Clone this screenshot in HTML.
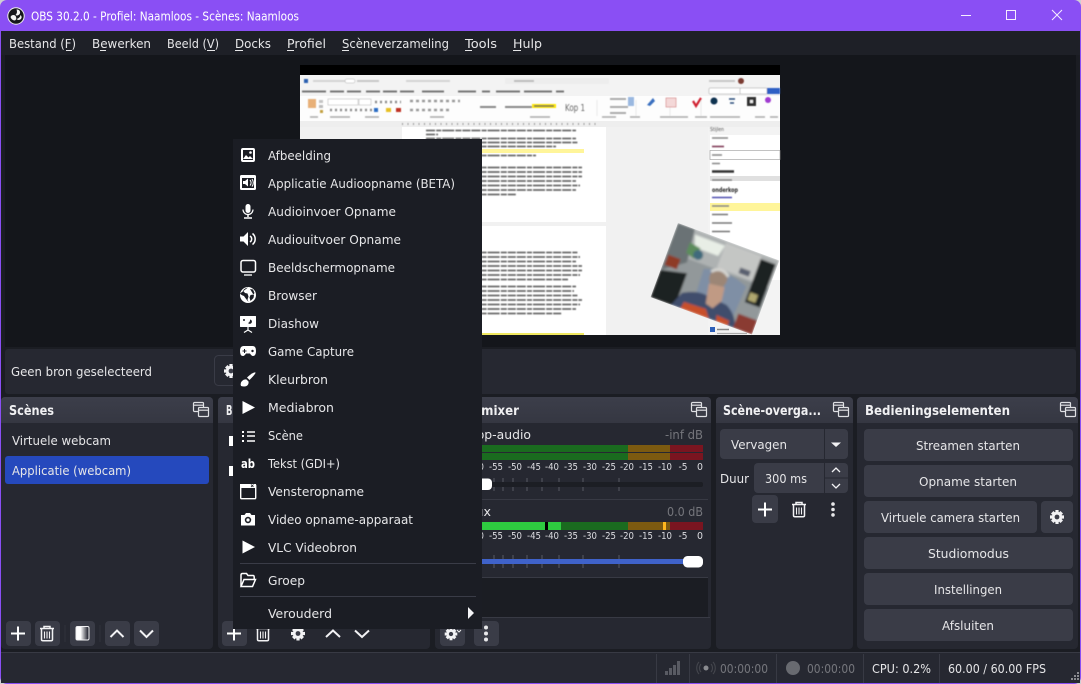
<!DOCTYPE html>
<html lang="nl"><head><meta charset="utf-8"><title>OBS 30.2.0</title>
<style>
html,body{margin:0;padding:0;background:#cfcfd4;overflow:hidden}
svg{display:block}
text{font-family:"DejaVu Sans","Liberation Sans",sans-serif;font-size:12.5px;fill:#e6e6e8}
.b{font-weight:bold;font-size:13px;fill:#f0f0f2}
.s{font-size:10px;fill:#dcdce0}
.g{fill:#75767c}
.t{font-size:5px;fill:#555}
.w{fill:#fff}
.bt{fill:#3a3c47}
</style></head><body>
<svg width="1081" height="684" viewBox="0 0 1081 684" xmlns="http://www.w3.org/2000/svg">
<defs>
<filter id="bl" x="-10%" y="-10%" width="120%" height="120%"><feGaussianBlur stdDeviation="1"/></filter>
<filter id="sb" x="-5%" y="-5%" width="110%" height="110%"><feGaussianBlur stdDeviation="0.5"/></filter>
<linearGradient id="hg" x1="0" y1="0" x2="0" y2="1"><stop offset="0" stop-color="#3c3e4a"/><stop offset="1" stop-color="#353742"/></linearGradient>
<linearGradient id="fg" x1="0" y1="0" x2="1" y2="0"><stop offset="0" stop-color="#fff"/><stop offset=".35" stop-color="#fff"/><stop offset=".9" stop-color="#30323c"/></linearGradient>
<g id="fl" fill="none" stroke="#dfe0e4" stroke-width="1.2"><rect x="1.5" y="1.5" width="10" height="9" rx="1"/><path d="M1.5 4.2h10" /><rect x="6.5" y="6.5" width="10" height="9" rx="1" fill="#3a3c47"/><path d="M6.5 9.2h10"/></g>
<g id="plus"><path d="M-7 0H7M0-7V7" stroke="#fff" stroke-width="2"/></g>
<g id="trash" fill="none" stroke="#f2f2f4" stroke-width="1.5"><path d="M-7-5H7M-3-5V-7H3V-5"/><path d="M-5.5-4.5V6Q-5.5 7.3-4 7.3H4Q5.5 7.3 5.5 6V-4.5"/><path d="M-2.5-2V5M0-2V5M2.500-2V5" stroke-width="1.100"/></g>
<g id="gear"><circle r="5.200" fill="#f2f2f4"/><path d="M-1.600-7H1.600V7H-1.600ZM-7-1.600V1.600H7V-1.600ZM-6-3.500L-3.500-6 6 3.500 3.500 6ZM3.500-6L6-3.500-3.500 6-6 3.500Z" fill="#f2f2f4"/><circle r="2.400" fill="#3a3c47"/></g>
<g id="dots" fill="#e8e8ea"><circle cy="-6" r="2"/><circle r="2"/><circle cy="6" r="2"/></g>
<clipPath id="cam"><rect width="108" height="79"/></clipPath>
</defs>

<!-- window frame -->
<rect width="1081" height="684" rx="7" fill="#8a4ff4"/>
<rect x="1" y="31" width="1079" height="652" fill="#1b1d23"/>

<!-- title bar -->
<circle cx="16" cy="16" r="8.200" fill="#16171b" stroke="#eee" stroke-width="1"/>
<path d="M16.500 9.500a3 3 0 1 1-1 5.500a5 5 0 0 0 1-5.500ZM10.500 17a3 3 0 1 1 4.500 3.500a5 5 0 0 1-4.500-3.500ZM21.500 18a3 3 0 0 1-5 1a5 5 0 0 0 4-4a3 3 0 0 1 1 3Z" fill="#f4f4f4"/>
<text x="31" y="20.500" textLength="268" lengthAdjust="spacingAndGlyphs" style="font-size:12px;fill:#fff">OBS 30.2.0 - Profiel: Naamloos - Scènes: Naamloos</text>
<path d="M961 15.500H971" stroke="#f6eeff" stroke-width="1"/>
<rect x="1006.500" y="10.500" width="9" height="9" fill="none" stroke="#f6eeff" stroke-width="1"/>
<path d="M1052 10L1062 20M1062 10L1052 20" stroke="#f6eeff" stroke-width="1"/>

<!-- menu bar -->
<rect x="1" y="31" width="1079" height="24" fill="#1e2027"/>
<g>
<text x="9" y="48" textLength="67" lengthAdjust="spacingAndGlyphs">Bestand (F)</text><rect x="66" y="50" width="6" height="1" fill="#e6e6e8"/>
<text x="92" y="48" textLength="59" lengthAdjust="spacingAndGlyphs">Bewerken</text><rect x="100" y="50" width="6" height="1" fill="#e6e6e8"/>
<text x="167" y="48" textLength="52" lengthAdjust="spacingAndGlyphs">Beeld (V)</text><rect x="207" y="50" width="8" height="1" fill="#e6e6e8"/>
<text x="235" y="48" textLength="36" lengthAdjust="spacingAndGlyphs">Docks</text><rect x="235" y="50" width="8" height="1" fill="#e6e6e8"/>
<text x="287" y="48" textLength="39" lengthAdjust="spacingAndGlyphs">Profiel</text><rect x="287" y="50" width="7" height="1" fill="#e6e6e8"/>
<text x="342" y="48" textLength="107" lengthAdjust="spacingAndGlyphs">Scèneverzameling</text><rect x="342" y="50" width="7" height="1" fill="#e6e6e8"/>
<text x="465" y="48" textLength="32" lengthAdjust="spacingAndGlyphs">Tools</text><rect x="465" y="50" width="7" height="1" fill="#e6e6e8"/>
<text x="513" y="48" textLength="29" lengthAdjust="spacingAndGlyphs">Hulp</text><rect x="513" y="50" width="8" height="1" fill="#e6e6e8"/>
</g>

<!-- preview -->
<rect x="5" y="55" width="1071" height="292" fill="#14161b"/>
<rect x="300" y="65" width="480" height="270" fill="#000"/>
<rect x="300" y="75" width="480" height="260" fill="#f1f1f1"/>
<rect x="300" y="75" width="480" height="21" fill="#f3f3f3"/>
<rect x="300" y="96" width="480" height="25" fill="#fdfdfd"/>
<rect x="300" y="121" width="480" height="6" fill="#eeeeee"/>
<rect x="402" y="127" width="204" height="95" fill="#fff"/>
<rect x="402" y="226" width="204" height="109" fill="#fff"/>
<rect x="426" y="149" width="158" height="4" fill="#fff59a"/>
<rect x="426" y="333" width="158" height="2" fill="#f0e860"/>
<rect x="708" y="127" width="72" height="208" fill="#f3f3f3"/>
<rect x="710" y="135" width="70" height="145" fill="#fff"/>
<rect x="710" y="150.500" width="70" height="9" fill="#fff" stroke="#999" stroke-width=".6"/>
<rect x="710" y="176" width="70" height="5" fill="#e0e0e0"/>
<rect x="710" y="203" width="70" height="8" fill="#fff59a"/>
<g filter="url(#sb)">
<rect x="304" y="79" width="4" height="4" fill="#2b5fb0"/>
<rect x="313" y="80" width="32" height="2" fill="#d4d4d4"/><rect x="345" y="79" width="10" height="4" rx="2" fill="#fff" stroke="#aaa" stroke-width=".5"/>
<rect x="357" y="80" width="22" height="2" fill="#c8c8c8"/><rect x="406" y="80" width="44" height="2" fill="#d4d4d4"/>
<rect x="505" y="78" width="104" height="6" rx="1" fill="#ededed"/><rect x="514" y="80" width="20" height="2" fill="#bbb"/>
<rect x="709" y="80" width="26" height="2" fill="#c8c8c8"/><circle cx="741" cy="81" r="3" fill="#7a3a30"/>
<rect x="709" y="88" width="32" height="6" rx="1" fill="#fff" stroke="#999" stroke-width=".5"/><rect x="740" y="88" width="27" height="6" rx="1" fill="#fff" stroke="#999" stroke-width=".5"/><rect x="767" y="88" width="13" height="6" fill="#2f5fc4"/>
<path d="M302 91.500h24M330 91.500h14M347 91.500h14M366 91.500h14M383 91.500h14M400 91.500h14M422 91.500h22M458 91.500h18M482 91.500h8M496 91.500h24M524 91.500h28M556 91.500h8" stroke="#777" stroke-width="2"/>
<rect x="308" y="99" width="8" height="9" fill="#e8b078"/><rect x="319" y="100" width="4" height="3" fill="#c4c4c4"/><rect x="319" y="105" width="4" height="3" fill="#bbb"/><rect x="320" y="110" width="3" height="3" fill="#c3a040"/>
<rect x="328" y="99" width="30" height="6" fill="#fff" stroke="#aaa" stroke-width=".5"/><rect x="359" y="99" width="12" height="6" fill="#fff" stroke="#aaa" stroke-width=".5"/>
<path d="M375 102h26M330 110h42" stroke="#888" stroke-width="2.500" stroke-dasharray="2 3"/>
<rect x="374" y="108" width="4" height="4" fill="#2b6cc4"/><rect x="386" y="108" width="5" height="4" fill="#e8c020"/><rect x="396" y="108" width="5" height="4" fill="#c03020"/>
<path d="M410 101h50M410 110h42" stroke="#999" stroke-width="2.500" stroke-dasharray="3 3"/>
<path d="M480 107h16M505 107h27" stroke="#888" stroke-width="2"/>
<rect x="532" y="104" width="24" height="4" fill="#ffe800"/><path d="M534 106h20" stroke="#665" stroke-width="1.500"/>
<text x="565" y="111" textLength="20" lengthAdjust="spacingAndGlyphs" style="font-size:10px;fill:#666">Kop 1</text>
<path d="M597 100v16M670 100v16M636 100v16M701 100v16" stroke="#ddd" stroke-width=".6"/>
<path d="M610 99h16M610 107h18M610 113h16" stroke="#aaa" stroke-width="2"/>
<rect x="628" y="97" width="6" height="9" fill="#9ab8e0"/><path d="M647 105l6-7 2 3-5 5z" fill="#3a70c0"/><rect x="666" y="98" width="10" height="9" fill="#f4d8d8" stroke="#c86060" stroke-width=".5"/><path d="M693 101l3 5 5-8" stroke="#d02030" stroke-width="2.200" fill="none"/>
<circle cx="714" cy="101" r="3.500" fill="#113050"/><path d="M729 99h6M730 103h4" stroke="#2a4a7a" stroke-width="1.500"/><rect x="747" y="97" width="9" height="9" fill="#333"/><rect x="750" y="100" width="3" height="3" fill="#eee"/><circle cx="768" cy="100" r="3" fill="#a03ad0"/>
<path d="M330 117h20M365 117h14M430 117h14M530 117h20M602 117h14M630 117h10M660 117h28M695 117h12M710 117h30M755 117h10M770 117h8M310 117h8" stroke="#aaa" stroke-width="1.500"/>
<path d="M402 124h196" stroke="#999" stroke-width="2" stroke-dasharray="1 4.500"/>
<g fill="none" stroke="#6a6a6a" stroke-width="1.700" stroke-dasharray="9 1.200 5 1 12 1.200 6 1 8 1">
<path d="M426 130.500h150M426 134.500h12M426 138.500h150M426 142.500h152M426 146.500h130M426 155.500h110"/>
<path d="M426 167.500h156M426 172h156M426 176.500h156M426 181h150M426 185.500h154M426 190h150M426 194.500h90"/>
<path d="M426 252.500h152M426 257h154M426 261.500h150M426 266h156M426 270.500h156M426 275h154M426 279.500h142"/>
<path d="M426 286.500h150M426 291h148M426 295.500h152M426 300h156M426 304.500h154M426 309h150M426 313.500h136"/>
</g>
<text x="710" y="131" class="t" textLength="14" lengthAdjust="spacingAndGlyphs">Stijlen</text>
<path d="M712 138h16M712 146.500h12M712 155h10M712 163.500h8" stroke="#888" stroke-width="1.500"/>
<path d="M712 146.500h12" stroke="#8a4060" stroke-width="1.500"/>
<path d="M712 171.500h22" stroke="#333" stroke-width="2.500"/>
<path d="M712 180h20" stroke="#888" stroke-width="1.500"/>
<text x="712" y="192" textLength="26" lengthAdjust="spacingAndGlyphs" style="font-size:6.500px;font-weight:bold;fill:#222">onderkop</text>
<path d="M712 197.500h20" stroke="#5050b0" stroke-width="1.500"/>
<path d="M712 206h17" stroke="#888" stroke-width="1.500"/>
<path d="M712 214.500h16M712 223h20M712 231.500h18" stroke="#777" stroke-width="1.500"/>
</g>
<!-- webcam overlay -->
<g transform="translate(678,223) rotate(20.300)">
<g clip-path="url(#cam)">
<g filter="url(#bl)">
<rect width="108" height="79" fill="#92989a"/>
<path d="M0 0H18L22 34L0 50Z" fill="#6a7274"/>
<path d="M18 0H108V30H22Z" fill="#aeb2b2"/>
<path d="M52 2H90V28H52Z" fill="#c4c6c4"/>
<path d="M20 5H52L49 17H24Z" fill="#e8eee6"/>
<path d="M18 14l12 2-3 12-9-3z" fill="#5c8c5c"/>
<circle cx="30" cy="23" r="5" fill="#3f6a7c"/>
<rect x="2" y="33" width="13" height="11" fill="#8e3a28"/>
<path d="M0 50L26 44V79H0Z" fill="#1f2123"/>
<rect x="90" y="5" width="16" height="46" fill="#1e2020"/>
<rect x="74" y="20" width="11" height="6" fill="#5a6070"/>
<path d="M40 34Q62 26 86 36L84 72H42Z" fill="#7f8fa5"/>
<path d="M22 79L28 64Q42 56 52 58L74 60Q86 66 90 79Z" fill="#3f4d6c"/>
<path d="M33 72L56 71 62 79H32ZM68 73L82 74V79H70Z" fill="#c8502a"/>
<ellipse cx="57" cy="38" rx="9" ry="10" fill="#9c8676"/>
<path d="M48 34Q56 25 66 33" fill="none" stroke="#d4d4d0" stroke-width="3"/>
<path d="M50 46L66 44 68 58 62 68 54 66Z" fill="#c09a84"/>
<rect x="88" y="64" width="20" height="15" fill="#8a3a30"/>
<rect x="92" y="40" width="8" height="8" fill="#b0a870"/>
</g></g></g>
<rect x="710" y="327" width="5" height="5" fill="#2c5fb8"/>
<path d="M717 329.500h12" stroke="#888" stroke-width="1.500"/>
<path d="M717 333.500h30" stroke="#aaa" stroke-width="1.200"/>

<!-- source info row -->
<rect x="5" y="349" width="1071" height="45" rx="3" fill="#262831"/>
<text x="11" y="376" textLength="141" lengthAdjust="spacingAndGlyphs">Geen bron geselecteerd</text>
<rect x="214.500" y="355.500" width="30" height="30" rx="4" fill="none" stroke="#3a3c47"/>
<use href="#gear" transform="translate(231,371)"/>

<!-- docks -->
<g>
<rect x="1" y="397" width="212" height="252" rx="4" fill="#262831"/>
<rect x="218" y="397" width="212" height="252" rx="4" fill="#262831"/>
<rect x="435" y="397" width="276" height="252" rx="4" fill="#262831"/>
<rect x="716" y="397" width="137" height="252" rx="4" fill="#262831"/>
<rect x="857" y="397" width="221" height="252" rx="4" fill="#262831"/>
<path d="M1 401a4 4 0 0 1 4-4H209a4 4 0 0 1 4 4V423H1Z" fill="url(#hg)"/>
<path d="M218 401a4 4 0 0 1 4-4H426a4 4 0 0 1 4 4V423H218Z" fill="url(#hg)"/>
<path d="M435 401a4 4 0 0 1 4-4H707a4 4 0 0 1 4 4V423H435Z" fill="url(#hg)"/>
<path d="M716 401a4 4 0 0 1 4-4H849a4 4 0 0 1 4 4V423H716Z" fill="url(#hg)"/>
<path d="M857 401a4 4 0 0 1 4-4H1074a4 4 0 0 1 4 4V423H857Z" fill="url(#hg)"/>
</g>
<text class="b" x="9" y="415" textLength="45" lengthAdjust="spacingAndGlyphs">Scènes</text>
<text class="b" x="226" y="415" textLength="40" lengthAdjust="spacingAndGlyphs">Bronnen</text>
<text class="b" x="443" y="415" textLength="76" lengthAdjust="spacingAndGlyphs">Audiomixer</text>
<text class="b" x="723" y="415" textLength="98" lengthAdjust="spacingAndGlyphs">Scène-overga...</text>
<text class="b" x="865" y="415" textLength="145" lengthAdjust="spacingAndGlyphs">Bedieningselementen</text>
<use href="#fl" x="192" y="401"/><use href="#fl" x="690" y="401"/><use href="#fl" x="832" y="401"/><use href="#fl" x="1059" y="401"/>

<!-- scenes -->
<text x="12" y="445" textLength="99" lengthAdjust="spacingAndGlyphs">Virtuele webcam</text>
<rect x="5" y="456" width="204" height="28" rx="3" fill="#2549bd"/>
<text x="12" y="475" textLength="119" lengthAdjust="spacingAndGlyphs">Applicatie (webcam)</text>
<rect x="6" y="621" width="25" height="25" rx="4" class="bt"/><rect x="35" y="621" width="25" height="25" rx="4" class="bt"/><rect x="70" y="621" width="25" height="25" rx="4" class="bt"/><rect x="105" y="621" width="25" height="25" rx="4" class="bt"/><rect x="134" y="621" width="25" height="25" rx="4" class="bt"/>
<use href="#plus" transform="translate(18,633.500)"/>
<use href="#trash" transform="translate(47,633.500)"/>
<rect x="76" y="626.500" width="13" height="13.500" rx="1.500" fill="url(#fg)" stroke="#f0f0f2"/>
<path d="M110.500 637L117 630.500 123.500 637M140 630.500L146.500 637 153 630.500" fill="none" stroke="#f2f2f4" stroke-width="2"/>
<path d="M65 625v17M100 625v17" stroke="#30323c"/>

<!-- sources (mostly hidden) -->
<path d="M229 436h6v10h-6zM229 466h6v10h-6z" fill="#fff"/>
<rect x="222" y="621" width="25" height="25" rx="4" class="bt"/>
<use href="#plus" transform="translate(234,633.500)"/>
<use href="#trash" transform="translate(263,633.500)"/>
<use href="#gear" transform="translate(298,633.500)"/>
<path d="M326 637L333 630.500 340 637M355 630.500L362 637 369 630.500" fill="none" stroke="#f2f2f4" stroke-width="2"/>

<!-- mixer -->
<rect x="436" y="578" width="272" height="40" fill="#1b1d23"/>
<path d="M436 499.500H708M436 577.500H708M436 617.500H710" stroke="#383a44"/>
<text x="441" y="439" textLength="90" lengthAdjust="spacingAndGlyphs">Desktop-audio</text>
<text x="665" y="439" textLength="38" lengthAdjust="spacingAndGlyphs" class="g">-inf dB</text>
<text x="441" y="516" textLength="50" lengthAdjust="spacingAndGlyphs">Mic/Aux</text>
<text x="667" y="516" textLength="36" lengthAdjust="spacingAndGlyphs" class="g">0.0 dB</text>
<g>
<rect x="436" y="445" width="192" height="7" fill="#1a6b1f"/><rect x="628" y="445" width="42" height="7" fill="#7c5a10"/><rect x="670" y="445" width="33" height="7" fill="#7a1520"/>
<rect x="436" y="453" width="192" height="7" fill="#1a6b1f"/><rect x="628" y="453" width="42" height="7" fill="#7c5a10"/><rect x="670" y="453" width="33" height="7" fill="#7a1520"/>
<rect x="436" y="522" width="192" height="8" fill="#1a6b1f"/><rect x="628" y="522" width="42" height="8" fill="#7c5a10"/><rect x="670" y="522" width="33" height="8" fill="#7a1520"/>
<rect x="436" y="522" width="109" height="8" fill="#2ecc40"/><rect x="545" y="522" width="3" height="8" fill="#000"/><rect x="548" y="522" width="13" height="8" fill="#2ecc40"/>
<rect x="663" y="522" width="3" height="8" fill="#ffb71f"/>
</g>
<g>
<text class="s" x="477" y="470" text-anchor="middle" textLength="14" lengthAdjust="spacingAndGlyphs">-60</text><text class="s" x="496" y="470" text-anchor="middle" textLength="14" lengthAdjust="spacingAndGlyphs">-55</text><text class="s" x="515" y="470" text-anchor="middle" textLength="14" lengthAdjust="spacingAndGlyphs">-50</text><text class="s" x="534" y="470" text-anchor="middle" textLength="14" lengthAdjust="spacingAndGlyphs">-45</text><text class="s" x="552" y="470" text-anchor="middle" textLength="14" lengthAdjust="spacingAndGlyphs">-40</text><text class="s" x="571" y="470" text-anchor="middle" textLength="14" lengthAdjust="spacingAndGlyphs">-35</text><text class="s" x="590" y="470" text-anchor="middle" textLength="14" lengthAdjust="spacingAndGlyphs">-30</text><text class="s" x="609" y="470" text-anchor="middle" textLength="14" lengthAdjust="spacingAndGlyphs">-25</text><text class="s" x="627" y="470" text-anchor="middle" textLength="14" lengthAdjust="spacingAndGlyphs">-20</text><text class="s" x="646" y="470" text-anchor="middle" textLength="14" lengthAdjust="spacingAndGlyphs">-15</text><text class="s" x="665" y="470" text-anchor="middle" textLength="14" lengthAdjust="spacingAndGlyphs">-10</text><text class="s" x="683" y="470" text-anchor="middle" textLength="9" lengthAdjust="spacingAndGlyphs">-5</text><text class="s" x="700" y="470" text-anchor="middle" textLength="6" lengthAdjust="spacingAndGlyphs">0</text>
<text class="s" x="477" y="539" text-anchor="middle" textLength="14" lengthAdjust="spacingAndGlyphs">-60</text><text class="s" x="496" y="539" text-anchor="middle" textLength="14" lengthAdjust="spacingAndGlyphs">-55</text><text class="s" x="515" y="539" text-anchor="middle" textLength="14" lengthAdjust="spacingAndGlyphs">-50</text><text class="s" x="534" y="539" text-anchor="middle" textLength="14" lengthAdjust="spacingAndGlyphs">-45</text><text class="s" x="552" y="539" text-anchor="middle" textLength="14" lengthAdjust="spacingAndGlyphs">-40</text><text class="s" x="571" y="539" text-anchor="middle" textLength="14" lengthAdjust="spacingAndGlyphs">-35</text><text class="s" x="590" y="539" text-anchor="middle" textLength="14" lengthAdjust="spacingAndGlyphs">-30</text><text class="s" x="609" y="539" text-anchor="middle" textLength="14" lengthAdjust="spacingAndGlyphs">-25</text><text class="s" x="627" y="539" text-anchor="middle" textLength="14" lengthAdjust="spacingAndGlyphs">-20</text><text class="s" x="646" y="539" text-anchor="middle" textLength="14" lengthAdjust="spacingAndGlyphs">-15</text><text class="s" x="665" y="539" text-anchor="middle" textLength="14" lengthAdjust="spacingAndGlyphs">-10</text><text class="s" x="683" y="539" text-anchor="middle" textLength="9" lengthAdjust="spacingAndGlyphs">-5</text><text class="s" x="700" y="539" text-anchor="middle" textLength="6" lengthAdjust="spacingAndGlyphs">0</text>
</g>
<rect x="440" y="482" width="263" height="5" rx="2" fill="#1c1e24"/>
<rect x="440" y="559" width="250" height="5" fill="#3f62c9"/>
<path d="M494 478v4M494 487v4M503 478v4M503 487v4M513 478v4M513 487v4M527 478v4M527 487v4M542 478v4M542 487v4M559 478v4M559 487v4M583 478v4M583 487v4M619 478v4M619 487v4M494 555v4M494 564v4M503 555v4M503 564v4M513 555v4M513 564v4M527 555v4M527 564v4M542 555v4M542 564v4M559 555v4M559 564v4M583 555v4M583 564v4M619 555v4M619 564v4" stroke="#585a62" stroke-width="1"/>
<rect x="478" y="478.500" width="14" height="11.500" rx="4" fill="#fff"/>
<rect x="683" y="556" width="20" height="11.500" rx="4.500" fill="#fff"/>
<rect x="440" y="621" width="25" height="25" rx="4" class="bt"/><rect x="474" y="621" width="25" height="25" rx="4" class="bt"/>
<use href="#gear" transform="translate(451,634) scale(.9)"/>
<path d="M457 630l2 2 2-2" fill="none" stroke="#eee"/>
<use href="#dots" transform="translate(486,633.500)"/>

<!-- transitions -->
<rect x="720" y="429" width="128" height="30" rx="4" class="bt"/><path d="M824.500 429v30" stroke="#262831"/>
<text x="731" y="449" textLength="56" lengthAdjust="spacingAndGlyphs">Vervagen</text>
<path d="M831 442.500h10l-5 4.500z" fill="#f2f2f4"/>
<text x="720" y="483" textLength="29" lengthAdjust="spacingAndGlyphs">Duur</text>
<rect x="754" y="463" width="94" height="30" rx="4" class="bt"/><path d="M824.500 463v30M825 478h23" stroke="#262831"/>
<text x="765" y="483" textLength="42" lengthAdjust="spacingAndGlyphs">300 ms</text>
<path d="M832 472l4-4 4 4M832 484l4 4 4-4" fill="none" stroke="#f2f2f4" stroke-width="1.300"/>
<rect x="752" y="495" width="26" height="28" rx="4" class="bt"/>
<use href="#plus" transform="translate(765,509.500)"/>
<use href="#trash" transform="translate(799,509.500)"/>
<use href="#dots" transform="translate(833,509.500) scale(.9)"/>

<!-- controls -->
<g>
<rect x="864" y="429" width="209" height="32" rx="4" class="bt"/>
<rect x="864" y="465" width="209" height="32" rx="4" class="bt"/>
<rect x="864" y="501" width="173" height="32" rx="4" class="bt"/>
<rect x="1041" y="501" width="32" height="32" rx="4" class="bt"/>
<rect x="864" y="537" width="209" height="32" rx="4" class="bt"/>
<rect x="864" y="573" width="209" height="32" rx="4" class="bt"/>
<rect x="864" y="609" width="209" height="32" rx="4" class="bt"/>
</g>
<text x="916" y="450" textLength="104" lengthAdjust="spacingAndGlyphs">Streamen starten</text>
<text x="919" y="486" textLength="98" lengthAdjust="spacingAndGlyphs">Opname starten</text>
<text x="881" y="522" textLength="139" lengthAdjust="spacingAndGlyphs">Virtuele camera starten</text>
<use href="#gear" transform="translate(1057,517)"/>
<text x="928" y="558" textLength="81" lengthAdjust="spacingAndGlyphs">Studiomodus</text>
<text x="934" y="594" textLength="68" lengthAdjust="spacingAndGlyphs">Instellingen</text>
<text x="942" y="630" textLength="52" lengthAdjust="spacingAndGlyphs">Afsluiten</text>

<!-- status bar -->
<rect x="1" y="653" width="1079" height="30" fill="#262831"/>
<path d="M1 652.500H1080" stroke="#383a44"/>
<path d="M656.500 654v29M689.500 654v29M776.500 654v29M863.500 654v29M939.500 654v29" stroke="#383a44"/>
<path d="M665 671h3v4h-3zM669 668h3v7h-3zM673 665h3v10h-3zM677 661h3v14h-3z" fill="#595b63"/>
<circle cx="706" cy="668" r="2.500" fill="#8a8b90"/>
<path d="M701 664a6 6 0 0 0 0 8M711 664a6 6 0 0 1 0 8M699 662a9 9 0 0 0 0 12M713 662a9 9 0 0 1 0 12" fill="none" stroke="#44464d" stroke-width="1.100"/>
<text class="g" x="720" y="673" textLength="48" lengthAdjust="spacingAndGlyphs">00:00:00</text>
<circle cx="793" cy="668" r="7" fill="#686a70"/>
<text class="g" x="807" y="673" textLength="48" lengthAdjust="spacingAndGlyphs">00:00:00</text>
<text x="872" y="673" textLength="59" lengthAdjust="spacingAndGlyphs">CPU: 0.2%</text>
<text x="948" y="673" textLength="98" lengthAdjust="spacingAndGlyphs">60.00 / 60.00 FPS</text>
<path d="M1077 672h2v2h-2zM1074 675h2v2h-2zM1077 675h2v2h-2zM1071 678h2v2h-2zM1074 678h2v2h-2zM1077 678h2v2h-2z" fill="#8a8b90"/>

<!-- context menu -->
<rect x="233" y="139" width="249" height="490" fill="#1b1d24"/>
<g>
<text x="268" y="160" textLength="63" lengthAdjust="spacingAndGlyphs">Afbeelding</text>
<text x="268" y="188" textLength="187" lengthAdjust="spacingAndGlyphs">Applicatie Audioopname (BETA)</text>
<text x="268" y="216" textLength="128" lengthAdjust="spacingAndGlyphs">Audioinvoer Opname</text>
<text x="268" y="244" textLength="133" lengthAdjust="spacingAndGlyphs">Audiouitvoer Opname</text>
<text x="268" y="272" textLength="127" lengthAdjust="spacingAndGlyphs">Beeldschermopname</text>
<text x="268" y="300" textLength="49" lengthAdjust="spacingAndGlyphs">Browser</text>
<text x="268" y="328" textLength="51" lengthAdjust="spacingAndGlyphs">Diashow</text>
<text x="268" y="356" textLength="86" lengthAdjust="spacingAndGlyphs">Game Capture</text>
<text x="268" y="384" textLength="60" lengthAdjust="spacingAndGlyphs">Kleurbron</text>
<text x="268" y="412" textLength="66" lengthAdjust="spacingAndGlyphs">Mediabron</text>
<text x="268" y="440" textLength="35" lengthAdjust="spacingAndGlyphs">Scène</text>
<text x="268" y="468" textLength="72" lengthAdjust="spacingAndGlyphs">Tekst (GDI+)</text>
<text x="268" y="496" textLength="96" lengthAdjust="spacingAndGlyphs">Vensteropname</text>
<text x="268" y="524" textLength="145" lengthAdjust="spacingAndGlyphs">Video opname-apparaat</text>
<text x="268" y="552" textLength="89" lengthAdjust="spacingAndGlyphs">VLC Videobron</text>
<text x="268" y="585" textLength="37" lengthAdjust="spacingAndGlyphs">Groep</text>
<text x="268" y="618" textLength="64" lengthAdjust="spacingAndGlyphs">Verouderd</text>
</g>
<path d="M240 563.500H476M240 596.500H476" stroke="#3a3c47"/>
<path d="M468 607l6 6-6 6z" fill="#f4f4f6"/>
<!-- menu icons -->
<rect x="241" y="148" width="14" height="14" rx="2" fill="#fff"/><rect x="243" y="150" width="10" height="10" fill="#1b1d24"/><circle cx="250.500" cy="152.500" r="1.300" fill="#fff"/><path d="M243 159l3-4 2.500 2.500 1.500-1.500 3 3z" fill="#fff"/>
<rect x="240" y="175" width="16" height="15" rx="1.500" fill="#fff"/><rect x="242" y="178" width="12" height="10" fill="#1b1d24"/><path d="M243 181h2l3-2.500v8L245 184h-2z" fill="#fff"/><path d="M250 180a4 4 0 0 1 0 5.500M252 179a6 6 0 0 1 0 7.500" fill="none" stroke="#fff"/>
<rect x="245.500" y="204" width="5" height="9" rx="2.500" fill="#fff"/><path d="M243 209.500a5 5 0 0 0 10 0" fill="none" stroke="#fff" stroke-width="1.200"/><path d="M248 214.500V217M244 218H252" stroke="#fff" stroke-width="1.500"/>
<path d="M240 236.500h3.500l4.500-4.500v14l-4.500-4.500H240z" fill="#fff"/><path d="M250 236a3.500 3.500 0 0 1 0 6M252.500 233.500a7 7 0 0 1 0 11" fill="none" stroke="#fff" stroke-width="1.500"/>
<rect x="241" y="260.500" width="14.500" height="11.500" rx="2" fill="none" stroke="#fff" stroke-width="1.500"/><path d="M244 275H252" stroke="#fff" stroke-width="1.300"/>
<circle cx="248" cy="295" r="8" fill="#fff"/><path d="M248 287.500q-3 .5-5 3 l2 2.500 2.500 .5 1 3-1 3 1 2.500q-4-5-4.500-6-3-1-4-2.500M250 289l3 .5 1.500 3.500-1 1.500-3 .5-1 2.500 1 3.500 3-3 .5-2.500" fill="#1b1d24"/>
<rect x="240" y="316" width="16" height="11" rx=".5" fill="#fff"/><path d="M248 327v3M248 330l-4 2.500M248 330l4 2.500" stroke="#fff" stroke-width="1.200"/><path d="M250 319.500a2.200 2.200 0 1 1-2 3.500 3 3 0 0 0 2-3.500Z" fill="#1b1d24"/><circle cx="244" cy="320" r="1" fill="#1b1d24"/>
<path d="M243.500 346h9q3.500 0 3.500 5 0 5-3 5-1.500 0-3-2.500h-4Q244.500 356 243 356q-3 0-3-5 0-5 3.500-5Z" fill="#fff"/><path d="M242.500 351h4M244.500 349v4" stroke="#1b1d24" stroke-width="1"/><circle cx="252.500" cy="351" r="1.200" fill="#1b1d24"/>
<path d="M255.500 372.500q.5 1-6 7.500l-2.500-2.500q6.500-6 8.500-5Z" fill="#fff"/><path d="M241 386q-1-3 1-5 2-2 4.500-1.500l2 2q.5 3-2 4.500-2 1-5.500 0Z" fill="#fff"/>
<path d="M242.500 401l12.500 6.500-12.500 6.500z" fill="#fff"/>
<path d="M242 431h2v2h-2zM242 435h2v2h-2zM242 440h2v2h-2z" fill="#fff"/><path d="M247 432h8M247 436h8M247 441h8" stroke="#fff" stroke-width="1.500"/>
<text x="241" y="468" textLength="14" lengthAdjust="spacingAndGlyphs" style="font-size:12px;font-weight:bold;fill:#fff">ab</text>
<rect x="240.700" y="484.700" width="15" height="14" rx="1" fill="none" stroke="#fff" stroke-width="1.400"/><rect x="240" y="484" width="16" height="4" fill="#fff"/><path d="M251 484.500l2.500 2.500M253.500 484.500L251 487" stroke="#1b1d24" stroke-width=".8"/>
<path d="M241 515h3.500l1.500-2h4l1.500 2H255v10.500H241z" fill="#fff"/><circle cx="248" cy="520" r="3.200" fill="#1b1d24"/><circle cx="248" cy="520" r="1.600" fill="#fff"/>
<path d="M242.500 540.500l12.500 6.500-12.500 6.500z" fill="#fff"/>
<path d="M241 586V575q0-1.500 1.500-1.500h4l1.500 2h5q1.200 0 1.200 1.500v2" fill="none" stroke="#fff" stroke-width="1.500"/><path d="M241 586.500l3-7h11.500l-3 7z" fill="none" stroke="#fff" stroke-width="1.500"/>
</svg>
</body></html>
